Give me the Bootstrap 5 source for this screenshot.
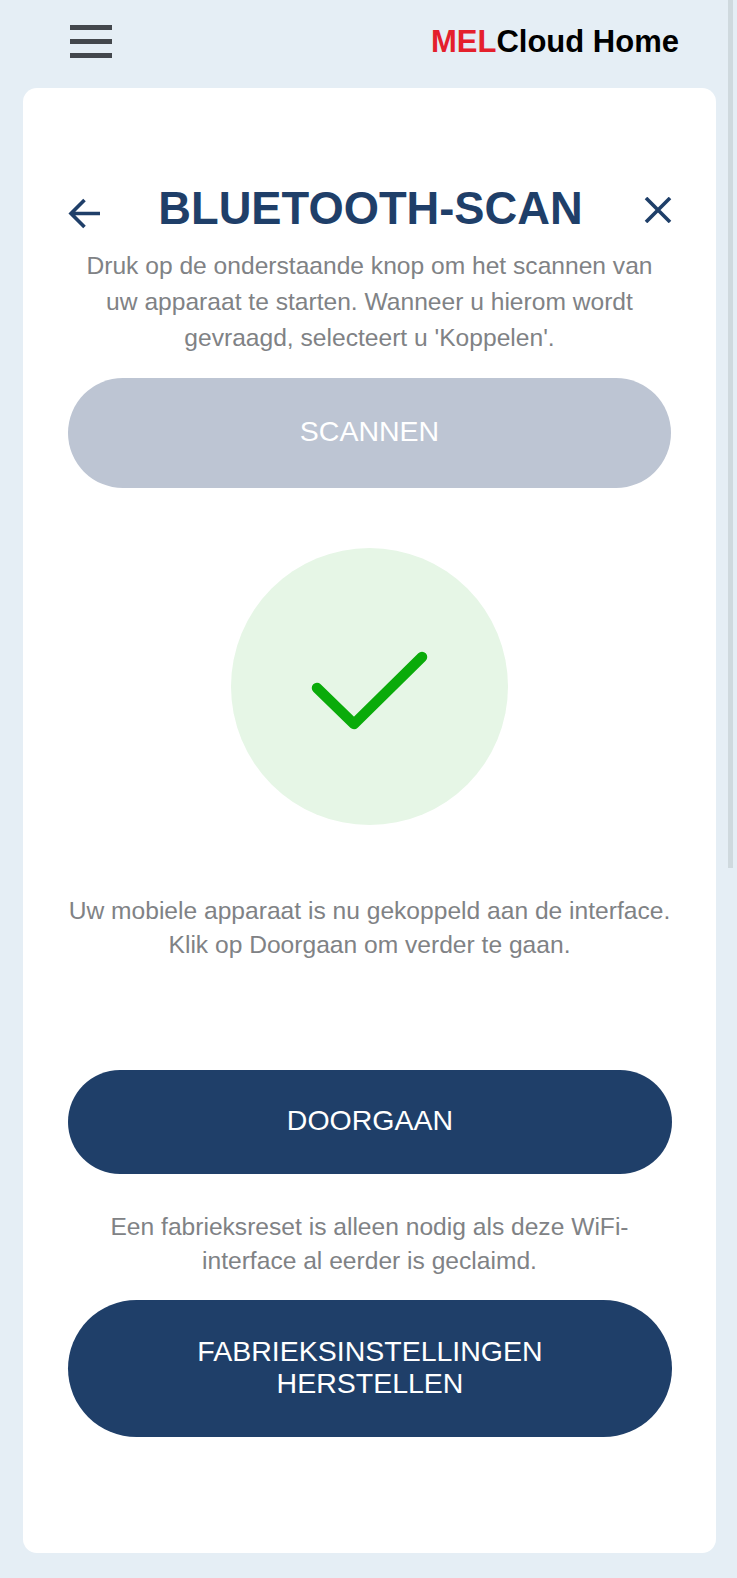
<!DOCTYPE html>
<html lang="nl">
<head>
<meta charset="utf-8">
<title>MELCloud Home</title>
<link href="https://cdn.jsdelivr.net/npm/bootstrap@5.3.0/dist/css/bootstrap.min.css" rel="stylesheet">
<style>
html,body{height:1578px;overflow:hidden}
body{background:#e5eef5;font-family:"Liberation Sans",Arial,sans-serif;position:relative}
.topbar{height:88px;padding:25px 58px 0 70px}
.burger{width:42px;height:33px;display:flex;flex-direction:column;justify-content:space-between}
.burger span{display:block;height:5px;background:#43474c}
.brand{font-size:31px;font-weight:700;color:#000;line-height:31px;margin-top:1px;white-space:nowrap}
.brand em{font-style:normal;color:#e4202c}
.panel{margin:0 21px 0 23px;height:1465px;background:#fff;border-radius:14px;padding:96px 45px 0}
.headrow{height:50px;align-items:center}
.headrow h1{font-size:45.3px;font-weight:700;color:#1f3f69;margin:0 3px 0 0;line-height:50px;white-space:nowrap}
.ic-back{width:32px;height:31px;margin-top:8px}
.ic-close{width:28px;height:26px;margin:1px -1px 0 0}
.intro{font-size:24.6px;line-height:36px;color:#808285;text-align:center;margin:14px -8px 0}
.pill{display:block;width:100%;border:0;border-radius:70px;color:#fff;text-align:center;font-family:inherit;padding-bottom:4px}
.pill-off{height:110px;background:#bdc5d3;font-size:28.5px;margin-top:22px}
.okdisc{width:277px;height:277px;border-radius:50%;background:#e6f6e6;margin:60px auto 0;display:flex}
.okdisc svg{width:277px;height:277px}
.note{font-size:24.6px;line-height:34px;color:#808285;text-align:center;margin:0 -8px}
.note-a{margin-top:69px}
.note-b{margin-top:36px;padding:0 40px}
.pill-on{background:#1f3f69;width:604px;font-size:28.5px}
.pill-go{height:104px;margin-top:108px}
.pill-reset{height:137px;margin-top:22px;line-height:32px}
.scrolltrack{position:absolute;right:4px;top:0;width:5px;height:868px;background:#cfd9de}
</style>
</head>
<body>
<div class="topbar d-flex justify-content-between align-items-start">
  <div class="burger"><span></span><span></span><span></span></div>
  <div class="brand"><em>MEL</em>Cloud Home</div>
</div>
<main class="panel">
  <div class="headrow d-flex justify-content-between">
    <svg class="ic-back" viewBox="0 0 32 31" fill="none" stroke="#1f3f69" stroke-width="3.6"><path d="M32 15.500H3M16.500 2 3 15.500 16.500 29"/></svg>
    <h1>BLUETOOTH-SCAN</h1>
    <svg class="ic-close" viewBox="0 0 28 26" fill="none" stroke="#1f3f69" stroke-width="3.6"><path d="M2 1l24 24M26 1 2 25"/></svg>
  </div>
  <p class="intro">Druk op de onderstaande knop om het scannen van<br>uw apparaat te starten. Wanneer u hierom wordt<br>gevraagd, selecteert u 'Koppelen'.</p>
  <button class="pill pill-off" type="button">SCANNEN</button>
  <div class="okdisc">
    <svg viewBox="0 0 277 277" fill="none" stroke="#0aab0a" stroke-width="10.500" stroke-linecap="round" stroke-linejoin="round"><path d="M86 140l37 36L191 109"/></svg>
  </div>
  <p class="note note-a">Uw mobiele apparaat is nu gekoppeld aan de interface.<br>Klik op Doorgaan om verder te gaan.</p>
  <button class="pill pill-on pill-go" type="button">DOORGAAN</button>
  <p class="note note-b">Een fabrieksreset is alleen nodig als deze WiFi-interface al eerder is geclaimd.</p>
  <button class="pill pill-on pill-reset" type="button">FABRIEKSINSTELLINGEN<br>HERSTELLEN</button>
</main>
<div class="scrolltrack"></div>
</body>
</html>
